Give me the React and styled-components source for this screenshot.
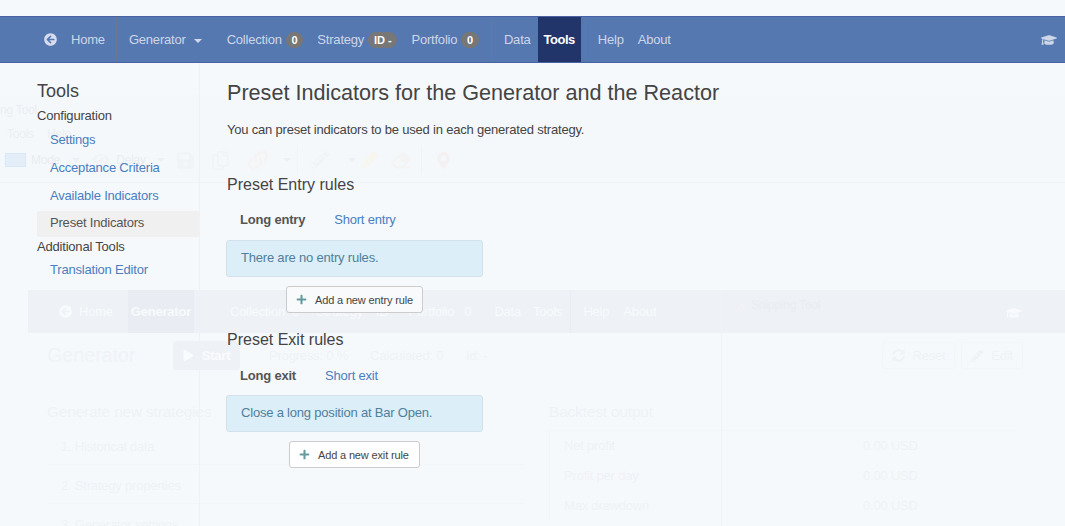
import styled, { createGlobalStyle } from "styled-components";
import {
  FaArrowCircleLeft,
  FaGraduationCap,
  FaPlay,
  FaPlus,
  FaPencilAlt,
  FaSave,
  FaRegCopy,
  FaSyncAlt,
  FaMapMarkerAlt,
  FaEraser,
  FaHighlighter,
  FaEye,
  FaLink,
  FaCut,
} from "react-icons/fa";

const GlobalStyle = createGlobalStyle`
  html, body {
    margin: 0;
    padding: 0;
    background: #f6f9fc;
  }
  body {
    font-family: "Liberation Sans", Arial, sans-serif;
    font-size: 13px;
    letter-spacing: -0.2px;
    color: #444;
  }
`;

function App() {
  return (
    <Page>
      <GlobalStyle />

      <SnipBackdrop aria-hidden="true">
        <SnipTitle>ng Tool</SnipTitle>
        <SnipMenu>
          <span>Tools</span>
          <span>Help</span>
        </SnipMenu>
        <SnipToolbar>
          <ModeIcon />
          <GhostLabel $ml={5}>Mode</GhostLabel>
          <GhostCaret $ml={12} />
          <GhostIcon $ml={12}><FaEye size={18} /></GhostIcon>
          <GhostLabel $ml={6}>Delay</GhostLabel>
          <GhostCaret $ml={11} />
          <GhostIcon $ml={11}><FaSave size={19} /></GhostIcon>
          <GhostIcon $ml={16}><FaRegCopy size={19} /></GhostIcon>
          <GhostIcon $ml={18} $tint="#f5f3f3"><FaLink size={20} /></GhostIcon>
          <GhostCaret $ml={15} />
          <GhostSep $ml={6} />
          <GhostIcon $ml={13}><FaPencilAlt size={18} /></GhostIcon>
          <GhostCaret $ml={19} />
          <GhostIcon $ml={4} $tint="#f6f6ee"><FaHighlighter size={18} /></GhostIcon>
          <GhostIcon $ml={13} $tint="#f5f4f5"><FaEraser size={20} /></GhostIcon>
          <GhostSep $ml={10} />
          <GhostIcon $ml={13} $tint="#f5f1f3"><FaMapMarkerAlt size={17} /></GhostIcon>
        </SnipToolbar>
      </SnipBackdrop>

      <AppBackdrop aria-hidden="true">
        <GhostNav>
          <GhostNavIcon><FaArrowCircleLeft size={13} /></GhostNavIcon>
          <GhostNavItem $ml={7}>Home</GhostNavItem>
          <GhostNavActive>Generator</GhostNavActive>
          <GhostNavItem $ml={36}>Collection</GhostNavItem>
          <GhostNavItem $ml={7}>0</GhostNavItem>
          <GhostNavItem $ml={17}>Strategy</GhostNavItem>
          <GhostNavItem $ml={13}>ID</GhostNavItem>
          <GhostNavItem $ml={20}>Portfolio</GhostNavItem>
          <GhostNavItem $ml={10}>0</GhostNavItem>
          <GhostNavItem $ml={23}>Data</GhostNavItem>
          <GhostNavItem $ml={12}>Tools</GhostNavItem>
          <GhostNavSep />
          <GhostNavItem $ml={12}>Help</GhostNavItem>
          <GhostNavItem $ml={14}>About</GhostNavItem>
        </GhostNav>
        <GhostHead>
          <GhostTitle>Generator</GhostTitle>
          <GhostStart><FaPlay size={11} /> Start</GhostStart>
          <GhostStat $w={101}>Progress: 0 %</GhostStat>
          <GhostStat $w={96}>Calculated: 0</GhostStat>
          <GhostStat $w={30}>Id: -</GhostStat>
        </GhostHead>
        <GhostColumns>
          <GhostColumn $w={502}>
            <GhostHeading $mb={10}>Generate new strategies</GhostHeading>
            <GhostStep>1. Historical data</GhostStep>
            <GhostStep>2. Strategy properties</GhostStep>
            <GhostStep>3. Generator settings</GhostStep>
          </GhostColumn>
          <GhostColumn $w={470}>
            <GhostHeading $mb={7}>Backtest output</GhostHeading>
            <GhostTable>
              <GhostRow><span>Net profit</span><b>0.00 USD</b></GhostRow>
              <GhostRow><span>Profit per day</span><b>0.00 USD</b></GhostRow>
              <GhostRow><span>Max drawdown</span><b>0.00 USD</b></GhostRow>
            </GhostTable>
          </GhostColumn>
        </GhostColumns>
      </AppBackdrop>

      <SnipWindow aria-hidden="true">
        <SnipBadge><FaCut size={13} /></SnipBadge>
        <span>Snipping Tool</span>
        <GhostCap><FaGraduationCap size={16} /></GhostCap>
        <GhostActions>
          <GhostAction $w={73}><FaSyncAlt size={13} /> Reset</GhostAction>
          <GhostAction $w={62}><FaPencilAlt size={12} /> Edit</GhostAction>
        </GhostActions>
      </SnipWindow>

      <Foreground>
        <NavBar>
          <NavLink $pr={6}>
            <HomeIcon><FaArrowCircleLeft size={13} /></HomeIcon>
            Home
          </NavLink>
          <Divider />
          <NavLink>Generator</NavLink>
          <Caret />
          <NavLink>Collection<Badge>0</Badge></NavLink>
          <NavLink>Strategy<Badge>ID -</Badge></NavLink>
          <NavLink>Portfolio<Badge>0</Badge></NavLink>
          <Divider />
          <NavLink>Data</NavLink>
          <NavLink $active>Tools</NavLink>
          <Divider $tight />
          <NavLink>Help</NavLink>
          <NavLink>About</NavLink>
          <CapIcon><FaGraduationCap size={16} /></CapIcon>
        </NavBar>

        <Layout>
          <Sidebar>
            <SideTitle>Tools</SideTitle>
            <SideGroup>Configuration</SideGroup>
            <SideLink>Settings</SideLink>
            <SideLink>Acceptance Criteria</SideLink>
            <SideLink>Available Indicators</SideLink>
            <SideCurrent>Preset Indicators</SideCurrent>
            <SideGroup $tight>Additional Tools</SideGroup>
            <SideLink>Translation Editor</SideLink>
          </Sidebar>

          <Main>
            <PageTitle>Preset Indicators for the Generator and the Reactor</PageTitle>
            <Lead>You can preset indicators to be used in each generated strategy.</Lead>

            <SectionTitle>Preset Entry rules</SectionTitle>
            <Tabs>
              <Tab $selected>Long entry</Tab>
              <Tab>Short entry</Tab>
            </Tabs>
            <Alert $gap={10}>There are no entry rules.</Alert>
            <ButtonRow $offset={59}>
              <AddButton $w={137} $translucent>
                <FaPlus size={11} />
                Add a new entry rule
              </AddButton>
            </ButtonRow>

            <SectionTitle $exit>Preset Exit rules</SectionTitle>
            <Tabs $exit>
              <Tab $selected>Long exit</Tab>
              <Tab>Short exit</Tab>
            </Tabs>
            <Alert $gap={9}>Close a long position at Bar Open.</Alert>
            <ButtonRow $offset={62}>
              <AddButton $w={131}>
                <FaPlus size={11} />
                Add a new exit rule
              </AddButton>
            </ButtonRow>
          </Main>
        </Layout>
      </Foreground>
    </Page>
  );
}

const Page = styled.div`
  position: relative;
  width: 1065px;
  height: 526px;
  overflow: hidden;
  background: #f6f9fc;
`;

/* faded windows showing through behind the page */
const SnipBackdrop = styled.div`
  position: absolute;
  left: 0;
  top: 95px;
  width: 1065px;
  height: 88px;
  box-sizing: border-box;
  border-bottom: 1px solid #f0f3f7;
  color: #ebeef2;
  background: #f5f8fb;
`;

const SnipTitle = styled.div`
  font-size: 12px;
  line-height: 16px;
  padding-top: 7px;
`;

const SnipMenu = styled.div`
  display: flex;
  gap: 13px;
  padding: 8px 0 0 7px;
  font-size: 12px;
  line-height: 16px;
`;

const SnipToolbar = styled.div`
  display: flex;
  align-items: center;
  height: 30px;
  padding: 3px 0 0 5px;
`;

const ModeIcon = styled.div`
  width: 21px;
  height: 14px;
  flex: none;
  background: #e3eef9;
  border: 1px solid #d8e8f7;
  box-sizing: border-box;
`;

const GhostLabel = styled.div`
  margin-left: ${(p) => p.$ml}px;
  flex: none;
  font-size: 12px;
  color: #e9ecf0;
`;

const GhostCaret = styled.span`
  width: 0;
  height: 0;
  flex: none;
  margin-left: ${(p) => p.$ml}px;
  border-left: 4px solid transparent;
  border-right: 4px solid transparent;
  border-top: 4px solid #eceff3;
`;

const GhostIcon = styled.div`
  margin-left: ${(p) => p.$ml}px;
  flex: none;
  display: flex;
  color: ${(p) => p.$tint || "#f1f4f7"};
`;

const GhostSep = styled.span`
  width: 1px;
  height: 28px;
  flex: none;
  margin-left: ${(p) => p.$ml}px;
  background: #eff2f6;
`;

const AppBackdrop = styled.div`
  position: absolute;
  left: 28px;
  top: 290px;
  width: 1037px;
  color: #eef1f5;
`;

const GhostNav = styled.div`
  display: flex;
  align-items: center;
  height: 43px;
  background: #eef2f7;
  color: #f8fafc;
`;

const GhostNavIcon = styled.span`
  display: flex;
  margin-left: 31px;
`;

const GhostNavItem = styled.div`
  margin-left: ${(p) => p.$ml}px;
  flex: none;
`;

const GhostNavActive = styled.div`
  width: 66px;
  height: 43px;
  margin-left: 15px;
  flex: none;
  display: flex;
  align-items: center;
  justify-content: center;
  font-weight: bold;
  background: #e9edf3;
`;

const GhostNavSep = styled.span`
  width: 1px;
  height: 43px;
  flex: none;
  margin-left: 8px;
  background: #e9edf3;
`;

const GhostHead = styled.div`
  display: flex;
  align-items: center;
  height: 44px;
  padding-left: 19px;
`;

const GhostTitle = styled.div`
  width: 126px;
  font-size: 20px;
  color: #f0f3f6;
`;

const GhostStart = styled.div`
  width: 67px;
  height: 29px;
  margin-right: 29px;
  display: flex;
  align-items: center;
  justify-content: center;
  gap: 8px;
  background: #eef2f7;
  border-radius: 3px;
  color: #fafbfd;
  font-weight: bold;
`;

const GhostStat = styled.div`
  width: ${(p) => p.$w}px;
  flex: none;
  color: #eff2f5;
`;

const GhostColumns = styled.div`
  display: flex;
  padding: 24px 0 0 19px;
`;

const GhostColumn = styled.div`
  width: ${(p) => p.$w}px;
  flex: none;
`;

const GhostHeading = styled.div`
  font-size: 15.5px;
  line-height: 22px;
  color: #eff2f5;
  margin-bottom: ${(p) => p.$mb}px;
`;

const GhostStep = styled.div`
  height: 32px;
  margin-bottom: 7px;
  line-height: 28px;
  padding-left: 14px;
  width: 478px;
  box-sizing: border-box;
  border-bottom: 1px solid #f2f5f9;
  color: #eff2f5;
`;

const GhostTable = styled.div`
  border-top: 1px solid #f2f5f9;
  border-left: 1px solid #f2f5f9;
`;

const GhostRow = styled.div`
  display: flex;
  height: 30px;
  line-height: 30px;
  padding-left: 14px;
  color: #eff2f5;

  span {
    width: 299px;
  }

  b {
    font-weight: normal;
  }
`;

const SnipWindow = styled.div`
  position: absolute;
  left: 721px;
  top: 290px;
  width: 344px;
  height: 236px;
  box-sizing: border-box;
  border-left: 1px solid #eff2f6;
  padding: 7px 0 0 29px;
  font-size: 12px;
  line-height: 16px;
  color: #e9ecf1;
`;

const SnipBadge = styled.span`
  position: absolute;
  left: 10px;
  top: 8px;
  display: flex;
  color: #f0f0f4;
`;

const GhostCap = styled.div`
  position: absolute;
  left: 284px;
  top: 15px;
  color: #f8fafc;
`;

const GhostActions = styled.div`
  position: absolute;
  left: 160px;
  top: 52px;
  display: flex;
  gap: 6px;
`;

const GhostAction = styled.div`
  width: ${(p) => p.$w}px;
  height: 27px;
  display: flex;
  align-items: center;
  justify-content: center;
  gap: 8px;
  box-sizing: border-box;
  border: 1px solid #f3f6f9;
  border-radius: 3px;
  font-size: 13px;
  color: #eff2f5;
`;

const Foreground = styled.div`
  position: relative;
  padding-top: 16px;
`;

const NavBar = styled.nav`
  display: flex;
  align-items: stretch;
  height: 47px;
  box-sizing: border-box;
  padding-left: 37px;
  padding-right: 8px;
  background: #5578b1;
  border-top: 1px solid #4a62a4;
  border-bottom: 1px solid #4a62a4;
`;

const NavLink = styled.a`
  display: flex;
  align-items: center;
  padding: 0 ${(p) => p.$pr || (p.$active ? 6 : 7)}px 0 ${(p) => (p.$active ? 6 : 7)}px;
  color: ${(p) => (p.$active ? "#fff" : "#ced6e8")};
  font-weight: ${(p) => (p.$active ? "bold" : "normal")};
  letter-spacing: ${(p) => (p.$active ? -0.5 : -0.2)}px;
  background: ${(p) => (p.$active ? "#22356a" : "transparent")};
  white-space: nowrap;
`;

const HomeIcon = styled.span`
  display: flex;
  margin-right: 14px;
  color: #d8dcee;
`;

const Divider = styled.span`
  width: 1px;
  flex: none;
  margin: 0 5px 0 ${(p) => (p.$tight ? 4 : 5)}px;
  background: #6c7690;
`;

const Caret = styled.span`
  width: 0;
  height: 0;
  align-self: center;
  margin: 2px 18px 0 1px;
  border-left: 4px solid transparent;
  border-right: 4px solid transparent;
  border-top: 4px solid #d4daea;
`;

const Badge = styled.span`
  display: inline-block;
  margin-left: 4px;
  padding: 3px 5.75px 2px;
  border-radius: 10px;
  background: #777;
  color: #fff;
  font-size: 11px;
  font-weight: bold;
  line-height: 11px;
  letter-spacing: 0;
`;

const CapIcon = styled.span`
  display: flex;
  align-items: center;
  margin-left: auto;
  color: #ced6e8;
`;

const Layout = styled.div`
  display: flex;
  height: 463px;
`;

const Sidebar = styled.aside`
  width: 200px;
  flex: none;
  box-sizing: border-box;
  padding: 16px 0 0 37px;
  border-right: 1px solid #eef1f5;
`;

const SideTitle = styled.div`
  font-size: 18px;
  line-height: 24px;
  letter-spacing: 0;
  color: #444;
`;

const SideGroup = styled.div`
  margin-top: ${(p) => (p.$tight ? 0 : 3)}px;
  height: ${(p) => (p.$tight ? 19 : 20)}px;
  line-height: 20px;
  color: #444;
`;

const SideLink = styled.a`
  display: block;
  height: 28px;
  line-height: 28px;
  padding-left: 13px;
  color: #4a7ec0;
`;

const SideCurrent = styled.a`
  display: block;
  height: 26px;
  line-height: 23px;
  margin-top: 1px;
  padding-left: 13px;
  color: #555;
  background: #f0f0f0;
`;

const Main = styled.main`
  flex: 1;
  padding: 15px 0 0 27px;
`;

const PageTitle = styled.h1`
  margin: 0;
  font-size: 21.6px;
  font-weight: normal;
  line-height: 30px;
  letter-spacing: 0;
  color: #444;
`;

const Lead = styled.p`
  margin: 13px 0 0;
  line-height: 18px;
  color: #444;
`;

const SectionTitle = styled.h2`
  margin: ${(p) => (p.$exit ? 17 : 36)}px 0 0;
  font-size: 16px;
  font-weight: normal;
  line-height: 20px;
  letter-spacing: 0;
  color: #444;
`;

const Tabs = styled.div`
  display: flex;
  gap: 29px;
  margin: ${(p) => (p.$exit ? 16 : 15)}px 0 0 13px;
  height: 20px;
  line-height: 20px;
`;

const Tab = styled.a`
  font-weight: ${(p) => (p.$selected ? "bold" : "normal")};
  color: ${(p) => (p.$selected ? "#555" : "#4a7ec0")};
`;

const Alert = styled.div`
  width: 257px;
  height: 37px;
  margin-top: ${(p) => p.$gap}px;
  margin-left: -1px;
  box-sizing: border-box;
  padding-left: 14px;
  line-height: 33px;
  background: #dceef7;
  border: 1px solid #d3e2ea;
  border-radius: 3px;
  color: #4f7f9d;
`;

const ButtonRow = styled.div`
  display: flex;
  margin: 9px 0 0 ${(p) => p.$offset}px;
`;

const AddButton = styled.button`
  display: flex;
  align-items: center;
  gap: 8px;
  width: ${(p) => p.$w}px;
  height: 27px;
  padding: 0 0 0 9px;
  box-sizing: border-box;
  background: ${(p) => (p.$translucent ? "#f8fafc" : "#fff")};
  border: 1px solid #ccc;
  border-radius: 3px;
  font-family: inherit;
  font-size: 11px;
  letter-spacing: -0.15px;
  color: #444;
  white-space: nowrap;

  svg {
    color: #659b9d;
    flex: none;
  }
`;

export default App;
